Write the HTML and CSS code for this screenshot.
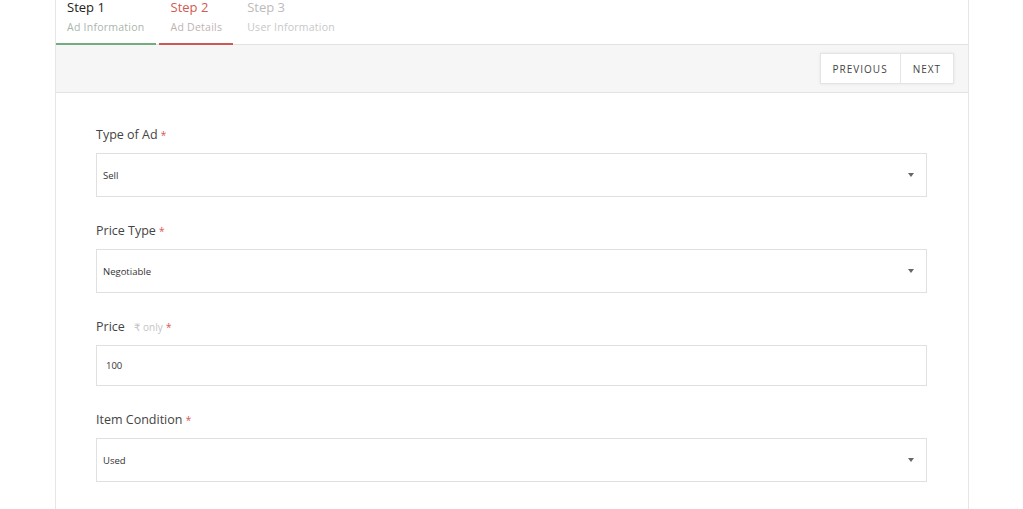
FILE: index.html
```html
<!DOCTYPE html>
<html lang="en">

<head>
    <meta charset="UTF-8">
    <meta name="viewport" content="width=device-width, initial-scale=1.0">
    <title>Post Ad - Step 2</title>
    <link rel="stylesheet" href="styles.css">
</head>

<body>
    <div class="wizard">
        <!-- step tabs -->
        <ul class="steps">
            <li class="step done">
                <span class="step-title">Step 1</span>
                <span class="step-sub">Ad Information</span>
            </li>
            <li class="step current">
                <span class="step-title">Step 2</span>
                <span class="step-sub">Ad Details</span>
            </li>
            <li class="step">
                <span class="step-title">Step 3</span>
                <span class="step-sub">User Information</span>
            </li>
        </ul>

        <div class="toolbar">
            <div class="btn-group">
                <button class="btn">PREVIOUS</button>
                <button class="btn">NEXT</button>
            </div>
        </div>

        <form class="ad-form">
            <div class="field">
                <label class="label">Type of Ad <span class="req">*</span></label>
                <div class="select">
                    <span>Sell</span>
                    <span class="caret"></span>
                </div>
            </div>

            <div class="field">
                <label class="label">Price Type <span class="req">*</span></label>
                <div class="select">
                    <span>Negotiable</span>
                    <span class="caret"></span>
                </div>
            </div>

            <div class="field">
                <label class="label">Price <span class="hint">₹ only</span> <span class="req">*</span></label>
                <div class="input">100</div>
            </div>

            <div class="field">
                <label class="label">Item Condition <span class="req">*</span></label>
                <div class="select">
                    <span>Used</span>
                    <span class="caret"></span>
                </div>
            </div>
        </form>
    </div>
</body>

</html>
```

FILE: styles.css
```css
* {
    box-sizing: border-box;
}

body {
    margin: 0;
    padding: 0;
    background: #ffffff;
    font-family: 'Open Sans', 'DejaVu Sans', sans-serif;
    color: #333;
    overflow: hidden;
}

/* Main card */
.wizard {
    width: 914px;
    margin: 0 0 0 55px;
    border-left: 1px solid #e6e6e6;
    border-right: 1px solid #e6e6e6;
    min-height: 509px;
}

/* Step tabs */
.steps {
    list-style: none;
    margin: 0;
    padding: 0;
    display: flex;
    border-bottom: 1px solid #e2e2e2;
    height: 45px;
}

.step {
    display: flex;
    flex-direction: column;
    padding: 0 11px 0 11px;
    margin-right: 3px;
    border-bottom: 2px solid transparent;
    margin-bottom: -1px;
}

.step.current {
    padding: 0 11px 0 12px;
}

.step-title {
    font-size: 13px;
    line-height: 15px;
    color: #bbb;
}

.step-sub {
    font-size: 10.5px;
    letter-spacing: 0.25px;
    line-height: 12px;
    margin-top: 6px;
    color: #c8c8c8;
}

.step.done {
    border-bottom-color: #72ad80;
}

.step.done .step-title {
    color: #222;
}

.step.done .step-sub {
    color: #aab6ad;
}

.step.current {
    border-bottom-color: #c95a5a;
}

.step.current .step-title {
    color: #d4594f;
}

.step.current .step-sub {
    color: #c0b2b2;
}

/* Toolbar with navigation */
.toolbar {
    background: #f6f6f6;
    border-bottom: 1px solid #e2e2e2;
    height: 48px;
    display: flex;
    justify-content: flex-end;
    align-items: center;
    padding-right: 14px;
}

.btn-group {
    display: flex;
    box-shadow: 0 0 3px rgba(0, 0, 0, 0.08);
}

.btn {
    background: #fff;
    border: 1px solid #e4e4e4;
    font-family: inherit;
    font-size: 10px;
    letter-spacing: 1px;
    color: #444;
    height: 31px;
    padding: 0 12px;
    cursor: pointer;
}

.btn + .btn {
    border-left: none;
}

/* Form */
.ad-form {
    padding: 34px 41px 0 40px;
}

.field {
    margin-bottom: 26px;
}

.label {
    display: block;
    font-size: 12.5px;
    color: #444;
    line-height: 16px;
    margin-bottom: 10px;
}

.req {
    color: #d9534f;
    font-size: 10px;
    vertical-align: top;
}

.hint {
    color: #c4c4c4;
    font-size: 10px;
    margin-left: 6px;
}

.select,
.input {
    height: 44px;
    border: 1px solid #e0e0e0;
    display: flex;
    align-items: center;
    justify-content: space-between;
    padding: 0 12px 0 6px;
    font-size: 9.5px;
    color: #333;
    background: #fff;
}

.input {
    height: 41px;
    padding-left: 9px;
}

.caret {
    width: 0;
    height: 0;
    border-left: 3.5px solid transparent;
    border-right: 3.5px solid transparent;
    border-top: 4px solid #666;
}
```
